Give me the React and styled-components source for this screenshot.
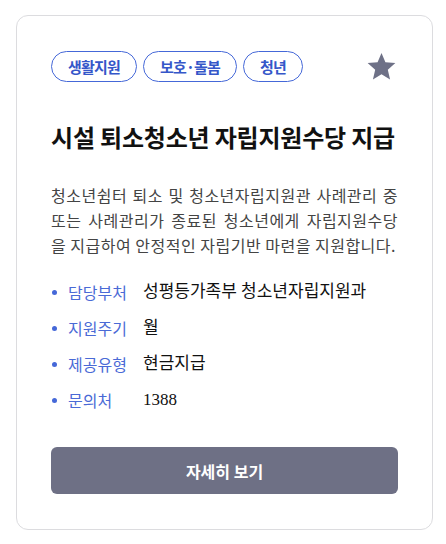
import React, { useState } from 'react';
import styled, { createGlobalStyle } from 'styled-components';

const GlobalStyle = createGlobalStyle`
  body {
    margin: 0;
    background: #fff;
    font-family: "Noto Sans CJK KR", "Noto Sans", sans-serif;
  }
`;

const tags = ['생활지원', '보호·돌봄', '청년'];

const info = [
  { label: '담당부처', value: '성평등가족부 청소년자립지원과' },
  { label: '지원주기', value: '월' },
  { label: '제공유형', value: '현금지급' },
  { label: '문의처', value: '1388' },
];

export default function App() {
  const [starred, setStarred] = useState(false);

  return (
    <Page>
      <GlobalStyle />
      <Card>
        <Top>
          <Tags>
            {tags.map(t => (
              <Tag key={t}>{t}</Tag>
            ))}
          </Tags>
          <StarButton onClick={() => setStarred(!starred)} aria-label="즐겨찾기">
            <svg width="31" height="29" viewBox="0 0 24 23">
              <path
                d="M12 0.8l3.1 7.3 7.9 0.7-6 5.2 1.8 7.8L12 17.7l-6.8 4.1 1.8-7.8-6-5.2 7.9-0.7z"
                fill={starred ? '#f5b400' : '#6e7187'}
              />
            </svg>
          </StarButton>
        </Top>

        <Title>시설 퇴소청소년 자립지원수당 지급</Title>

        <Desc>
          청소년쉼터 퇴소 및 청소년자립지원관 사례관리 중 또는 사례관리가 종료된 청소년에게 자립지원수당을 지급하여 안정적인 자립기반 마련을 지원합니다.
        </Desc>

        <InfoList>
          {info.map(i => (
            <InfoRow key={i.label}>
              <Label>{i.label}</Label>
              <Value>{i.value}</Value>
            </InfoRow>
          ))}
        </InfoList>

        <DetailButton>자세히 보기</DetailButton>
      </Card>
    </Page>
  );
}

const Page = styled.div`
  padding: 15px 13px 14px 16px;
`;

const Card = styled.div`
  box-sizing: border-box;
  width: 417px;
  height: 515px;
  border: 1px solid #dcdcdf;
  border-radius: 12px;
  padding: 35px 34px 0 34px;
  display: flex;
  flex-direction: column;
`;

const Top = styled.div`
  display: flex;
  justify-content: space-between;
  align-items: center;
`;

const Tags = styled.div`
  display: flex;
  gap: 6px;
`;

const Tag = styled.span`
  box-sizing: border-box;
  height: 31px;
  padding: 0 16px;
  border: 1px solid #4568d8;
  border-radius: 16px;
  color: #3557c9;
  font-size: 15px;
  font-weight: 700;
  letter-spacing: -0.8px;
  display: flex;
  align-items: center;
`;

const StarButton = styled.button`
  border: none;
  background: none;
  padding: 0;
  margin-right: 1px;
  cursor: pointer;
  display: flex;
`;

const Title = styled.h2`
  margin: 39px 0 0;
  font-size: 24px;
  font-weight: 700;
  color: #111;
  letter-spacing: -0.2px;
  line-height: 32px;
`;

const Desc = styled.p`
  margin: 30px 0 0;
  font-size: 16px;
  line-height: 25px;
  letter-spacing: 0.5px;
  color: #444;
  text-align: justify;
`;

const InfoList = styled.ul`
  list-style: none;
  margin: 22px 0 0;
  padding: 0;
  display: flex;
  flex-direction: column;
  gap: 12px;
`;

const InfoRow = styled.li`
  display: flex;
  align-items: center;
  font-size: 16px;
  line-height: 24px;

  &::before {
    content: '';
    width: 5px;
    height: 5px;
    border-radius: 50%;
    background: #4568d8;
    margin-right: 11px;
    margin-left: 1px;
  }
`;

const Label = styled.span`
  width: 75px;
  color: #4a6ad6;
`;

const Value = styled.span`
  color: #111;
  font-size: 17px;
  font-family: "Liberation Serif", "Noto Sans CJK KR", serif;
`;

const DetailButton = styled.button`
  margin-top: 35px;
  height: 47px;
  width: 100%;
  border: none;
  border-radius: 6px;
  background: #6e7085;
  color: #fff;
  font-family: "Noto Sans CJK KR", sans-serif;
  font-size: 16px;
  font-weight: 700;
  cursor: pointer;
`;
